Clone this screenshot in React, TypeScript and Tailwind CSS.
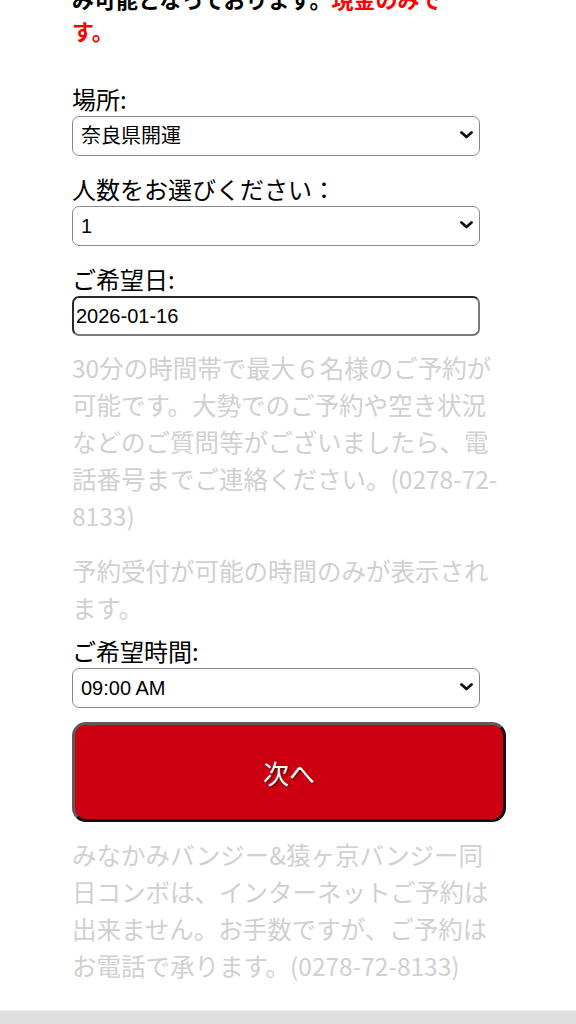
import React from 'react'

const CJK = '"Noto Sans CJK JP", "Noto Sans", sans-serif'
const FIELD = '"Liberation Sans", "Noto Sans CJK JP", sans-serif'

function Chevron() {
  return (
    <svg
      className="pointer-events-none absolute right-[7px] top-[15px]"
      width="13"
      height="8"
      viewBox="0 0 13 8"
      fill="none"
    >
      <path d="M1.5 1.5 L6.5 6 L11.5 1.5" stroke="#111" strokeWidth="2.8" strokeLinecap="round" strokeLinejoin="round" />
    </svg>
  )
}

function SelectBox({ value, className = '' }: { value: string; className?: string }) {
  return (
    <div className={`relative w-[408px] ${className}`}>
      <select
        defaultValue={value}
        className="block h-[40px] w-full appearance-none rounded-[7px] border border-[#8a8a8a] bg-white pl-[8px] pr-[30px] text-[20px] text-black outline-none"
        style={{ fontFamily: FIELD }}
      >
        <option value={value}>{value}</option>
      </select>
      <Chevron />
    </div>
  )
}

function Label({ children, className = '' }: { children: React.ReactNode; className?: string }) {
  return <label className={`block text-[24px] leading-[34px] text-black ${className}`}>{children}</label>
}

export default function App() {
  return (
    <div className="min-h-screen overflow-hidden bg-white" style={{ fontFamily: CJK }}>
      <div className="-mt-[18px] px-[72px]">
        {/* notice, scrolled partly off the top */}
        <p className="whitespace-nowrap text-[22px] font-bold leading-[32px] text-black">
          み可能となっております。<span className="text-[#ff0000]">現金のみで</span>
          <br />
          <span className="text-[#ff0000]">す。</span>
        </p>

        <Label className="mt-[36px]">場所:</Label>
        <SelectBox value="奈良県開運" />

        <Label className="mt-[16px]">人数をお選びください：</Label>
        <SelectBox value="1" />

        <Label className="mt-[16px]">ご希望日:</Label>
        <input
          type="text"
          readOnly
          value="2026-01-16"
          className="block h-[40px] w-[408px] rounded-[7px] border-2 border-t-[#2a2a2a] border-l-[#2a2a2a] border-r-[#7a7a7a] border-b-[#7a7a7a] bg-white pl-[2px] text-[20px] text-black outline-none"
          style={{ fontFamily: FIELD }}
        />

        <p className="mt-[13px] w-[432px] text-[24.5px] leading-[37px] text-[#d0d0d0]">
          30分の時間帯で最大６名様のご予約が可能です。大勢でのご予約や空き状況などのご質問等がございましたら、電話番号までご連絡ください。(0278-72-8133)
        </p>
        <p className="mt-[18px] w-[420px] text-[24.5px] leading-[37px] text-[#d0d0d0]">
          予約受付が可能の時間のみが表示されます。
        </p>

        <Label className="mt-[8px]">ご希望時間:</Label>
        <SelectBox value="09:00 AM" />

        <button
          type="button"
          className="mt-[14px] flex h-[100px] w-[434px] items-center justify-center rounded-[14px] border-[3px] border-t-[#5c5c5c] border-l-[#5c5c5c] border-r-[#111] border-b-[#111] bg-[#cc0010] text-[26px] text-white [text-shadow:1px_1px_2px_rgba(0,0,0,0.7)]"
        >
          次へ
        </button>

        <p className="mt-[14px] w-[420px] text-[24.5px] leading-[37px] text-[#d0d0d0]">
          みなかみバンジー&amp;猿ヶ京バンジー同日コンボは、インターネットご予約は出来ません。お手数ですが、ご予約はお電話で承ります。(0278-72-8133)
        </p>
      </div>

      <footer className="mt-[26px] h-[200px] border-t border-[#efefef] bg-[#dfdfdf]" />
    </div>
  )
}
